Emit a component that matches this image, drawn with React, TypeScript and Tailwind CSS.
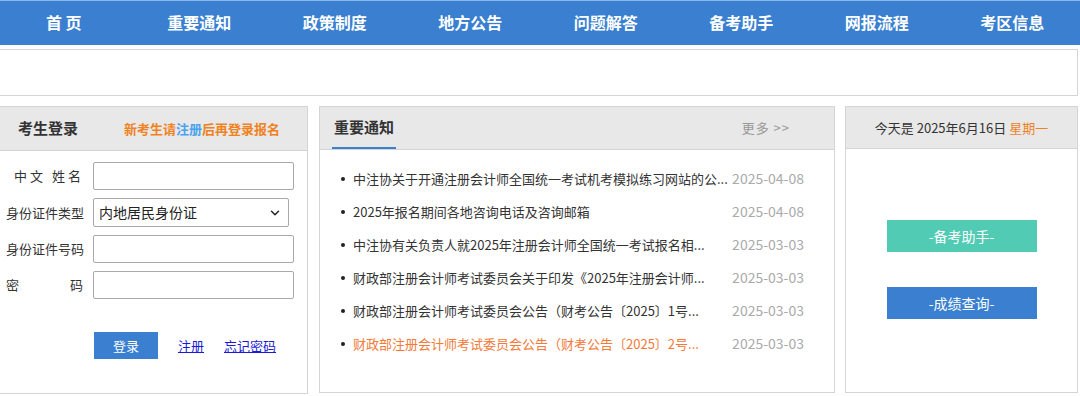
import { ChevronDown } from "lucide-react";

const NAV = ["首 页", "重要通知", "政策制度", "地方公告", "问题解答", "备考助手", "网报流程", "考区信息"];

type Notice = { title: string; date: string; hot?: boolean };

const NOTICES: Notice[] = [
  { title: "中注协关于开通注册会计师全国统一考试机考模拟练习网站的公...", date: "2025-04-08" },
  { title: "2025年报名期间各地咨询电话及咨询邮箱", date: "2025-04-08" },
  { title: "中注协有关负责人就2025年注册会计师全国统一考试报名相...", date: "2025-03-03" },
  { title: "财政部注册会计师考试委员会关于印发《2025年注册会计师...", date: "2025-03-03" },
  { title: "财政部注册会计师考试委员会公告（财考公告〔2025〕1号...", date: "2025-03-03" },
  { title: "财政部注册会计师考试委员会公告（财考公告〔2025〕2号...", date: "2025-03-03", hot: true },
];

const FONT = "font-['Microsoft_YaHei','Noto_Sans_CJK_SC',sans-serif]";

function LoginBox() {
  return (
    <div className="-ml-px flex h-[288px] w-[309px] flex-col border border-[#d4d4d4] bg-white">
      <div className="flex h-[44px] items-center border-b border-[#d4d4d4] bg-[#e8e8e8] pl-[18px]">
        <span className="text-[15px] font-bold text-[#333]">考生登录</span>
        <span className="ml-[46px] text-[13px] font-bold text-[#f0821e]">
          新考生请<span className="text-[#4aa3ee]">注册</span>后再登录报名
        </span>
      </div>
      <div className="flex flex-col gap-[8px] pt-[11px] text-[13px] text-[#333]">
        <div className="flex items-center">
          <span className="w-[85px] pr-[1px] text-right tracking-[3px]">中文&nbsp;姓名</span>
          <input className="ml-[8px] h-[28px] w-[201px] rounded-[2px] border border-[#a9a9a9] bg-white" />
        </div>
        <div className="flex items-center">
          <span className="w-[84px] pl-[6px]">身份证件类型</span>
          <div className="ml-[9px] flex h-[29px] w-[196px] items-center justify-between rounded-[2px] border border-[#a9a9a9] bg-white pl-[5px] pr-[6px] text-[14px] text-[#222]">
            <span>内地居民身份证</span>
            <ChevronDown className="h-[14px] w-[14px]" strokeWidth={2.5} />
          </div>
        </div>
        <div className="flex items-center">
          <span className="w-[84px] pl-[6px]">身份证件号码</span>
          <input className="ml-[9px] h-[28px] w-[201px] rounded-[2px] border border-[#a9a9a9] bg-white" />
        </div>
        <div className="flex items-center">
          <span className="flex w-[84px] justify-between pl-[6px] pr-[1px]">
            <span>密</span>
            <span>码</span>
          </span>
          <input className="ml-[9px] h-[28px] w-[201px] rounded-[2px] border border-[#a9a9a9] bg-white" />
        </div>
      </div>
      <div className="mt-[33px] flex items-center pl-[94px] text-[13px]">
        <button className="h-[27px] w-[64px] bg-[#3a7fd0] text-white">登录</button>
        <a className="ml-[20px] text-[#1a1ad6] underline">注册</a>
        <a className="ml-[20px] text-[#1a1ad6] underline">忘记密码</a>
      </div>
    </div>
  );
}

function NoticeBox() {
  return (
    <div className="ml-[11px] h-[287px] w-[516px] border border-[#d4d4d4] bg-white">
      <div className="flex h-[43px] items-end justify-between border-b border-[#d4d4d4] bg-[#e8e8e8] pl-[12px] pr-[44px]">
        <span className="border-b-2 border-[#3a7fd0] px-[2px] pb-[9px] text-[15px] font-bold text-[#333]">重要通知</span>
        <span className="pb-[12px] text-[13px] tracking-[1px] text-[#999]">更多 &gt;&gt;</span>
      </div>
      <ul className="flex flex-col gap-[14px] pl-[21px] pr-[30px] pt-[19px] text-[13px]">
        {NOTICES.map((n) => (
          <li key={n.title + n.hot} className="flex h-[19px] items-center">
            <span className="mr-[8px] h-[4px] w-[4px] rounded-full bg-[#222]" />
            <span className={"flex-1 " + (n.hot ? "text-[#f47a3a]" : "text-[#333]")}>{n.title}</span>
            <span className="text-[14px] text-[#aaa]">{n.date}</span>
          </li>
        ))}
      </ul>
    </div>
  );
}

function DateBox() {
  return (
    <div className="ml-[10px] flex h-[287px] w-[233px] flex-col border border-[#d4d4d4] bg-white">
      <div className="flex h-[42px] items-center justify-center border-b border-[#d4d4d4] bg-[#e8e8e8] text-[13px] text-[#333]">
        今天是 2025年6月16日&nbsp;<span className="text-[#f0821e]">星期一</span>
      </div>
      <div className="flex flex-col items-center gap-[35px] pt-[71px]">
        <button className="h-[32px] w-[150px] bg-[#52cbb5] text-[14px] text-white">-备考助手-</button>
        <button className="h-[32px] w-[150px] bg-[#3a7fd0] text-[14px] text-white">-成绩查询-</button>
      </div>
    </div>
  );
}

export default function App() {
  return (
    <div className={"h-[396px] w-[1080px] overflow-hidden bg-white " + FONT}>
      <nav className="h-[45px] overflow-hidden border-t border-[#8ab8ea] bg-[#3a7fd0] pb-[2px]">
        <div className="-ml-[4px] flex h-full">
          {NAV.map((item) => (
            <div key={item} className="flex w-[135.5px] shrink-0 items-center justify-center text-[16px] font-bold text-white">
              {item}
            </div>
          ))}
        </div>
      </nav>
      <div className="mt-[4px] h-[47px] w-[1078px] border border-l-0 border-[#d4d4d4]" />
      <div className="mt-[10px] flex">
        <LoginBox />
        <NoticeBox />
        <DateBox />
      </div>
    </div>
  );
}
